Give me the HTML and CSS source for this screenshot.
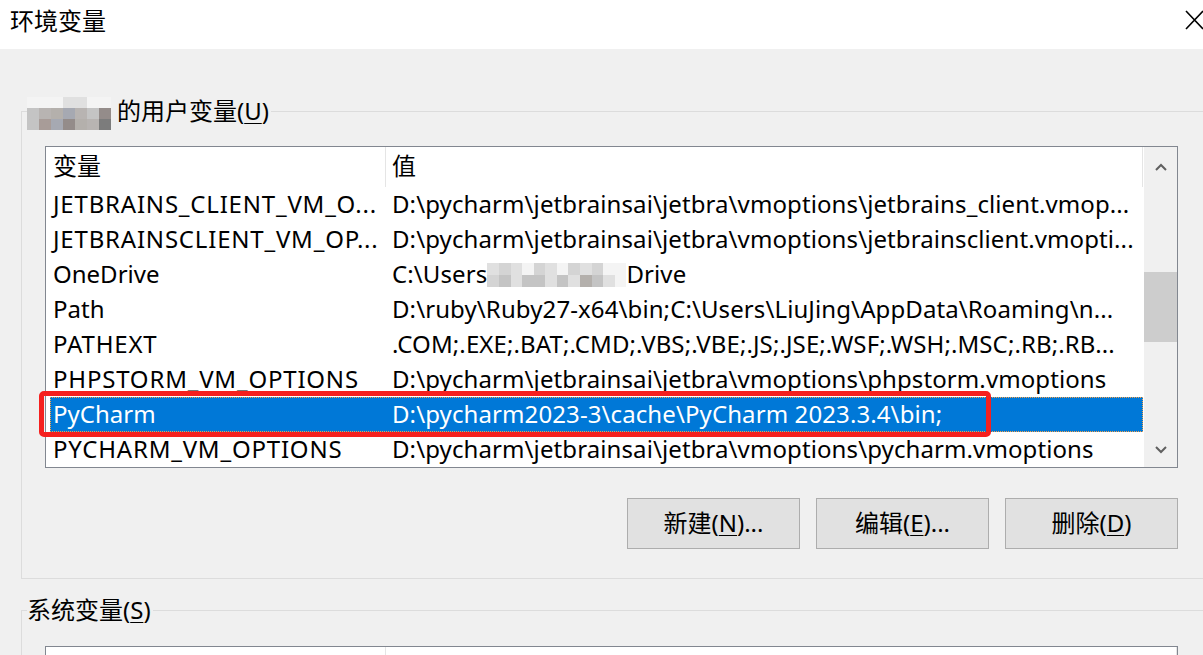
FILE: index.html
```html
<!DOCTYPE html>
<html lang="zh-CN">
<head>
    <meta charset="UTF-8">
    <title>环境变量</title>
    <link rel="stylesheet" href="styles.css">
</head>
<body>
    <div class="titlebar">
        <span class="title">环境变量</span>
        <svg class="close" width="19" height="20" viewBox="0 0 19 20">
            <path d="M1 1L18 19M18 1L1 19" stroke="#000" stroke-width="1.6" fill="none"/>
        </svg>
    </div>

    <div class="content">
        <!-- User variables -->
        <fieldset class="group">
            <legend>
                <span class="mosaic mosaic-name">
                    <i class="c0"></i><i class="c0"></i><i class="c0"></i><i class="c1"></i><i class="c1"></i><i class="c0"></i><i class="c0"></i>
                    <i class="c3"></i><i class="c8"></i><i class="c4"></i><i class="c6"></i><i class="c8"></i><i class="c3"></i><i class="c7"></i>
                    <i class="c3"></i><i class="c5"></i><i class="c6"></i><i class="c7"></i><i class="c4"></i><i class="c8"></i><i class="c9"></i>
                </span>的用户变量(<u>U</u>)
            </legend>
            <div class="group-body">
                <div class="listbox">
                    <div class="list">
                        <div class="list-head">
                            <div class="col-name">变量</div>
                            <div class="col-value">值</div>
                        </div>
                        <div class="row"><div class="col-name caps">JETBRAINS_CLIENT_VM_O...</div><div class="col-value">D:\pycharm\jetbrainsai\jetbra\vmoptions\jetbrains_client.vmop...</div></div>
                        <div class="row"><div class="col-name caps">JETBRAINSCLIENT_VM_OP...</div><div class="col-value">D:\pycharm\jetbrainsai\jetbra\vmoptions\jetbrainsclient.vmopti...</div></div>
                        <div class="row"><div class="col-name">OneDrive</div><div class="col-value">C:\Users<span class="mosaic mosaic-path"><i class="c1"></i><i class="c2"></i><i class="c1"></i><i class="c0"></i><i class="c2"></i><i class="c1"></i><i class="c0"></i><i class="c2"></i><i class="c1"></i><i class="c2"></i><i class="c0"></i><i class="c0"></i><i class="c2"></i><i class="c3"></i><i class="c1"></i><i class="c3"></i><i class="c3"></i><i class="c1"></i><i class="c3"></i><i class="c1"></i><i class="c4"></i><i class="c3"></i><i class="c1"></i><i class="c0"></i></span>Drive</div></div>
                        <div class="row"><div class="col-name">Path</div><div class="col-value">D:\ruby\Ruby27-x64\bin;C:\Users\LiuJing\AppData\Roaming\n...</div></div>
                        <div class="row"><div class="col-name caps">PATHEXT</div><div class="col-value">.COM;.EXE;.BAT;.CMD;.VBS;.VBE;.JS;.JSE;.WSF;.WSH;.MSC;.RB;.RB...</div></div>
                        <div class="row"><div class="col-name caps">PHPSTORM_VM_OPTIONS</div><div class="col-value">D:\pycharm\jetbrainsai\jetbra\vmoptions\phpstorm.vmoptions</div></div>
                        <div class="row selected"><div class="col-name">PyCharm</div><div class="col-value">D:\pycharm2023-3\cache\PyCharm 2023.3.4\bin;</div></div>
                        <div class="row"><div class="col-name caps">PYCHARM_VM_OPTIONS</div><div class="col-value">D:\pycharm\jetbrainsai\jetbra\vmoptions\pycharm.vmoptions</div></div>
                    </div>
                    <div class="scrollbar">
                        <div class="arrow arrow-up">
                            <svg width="12" height="8" viewBox="0 0 12 8"><path d="M1 7L6 2L11 7" stroke="#606060" stroke-width="2" fill="none"/></svg>
                        </div>
                        <div class="track"><div class="thumb"></div></div>
                        <div class="arrow arrow-down">
                            <svg width="12" height="8" viewBox="0 0 12 8"><path d="M1 1L6 6L11 1" stroke="#606060" stroke-width="2" fill="none"/></svg>
                        </div>
                    </div>
                    <div class="annotation"></div>
                </div>
                <div class="buttons">
                    <button>新建(<u>N</u>)...</button>
                    <button>编辑(<u>E</u>)...</button>
                    <button>删除(<u>D</u>)</button>
                </div>
            </div>
        </fieldset>

        <!-- System variables (only the top edge is in view) -->
        <fieldset class="group group-system">
            <legend>系统变量(<u>S</u>)</legend>
            <div class="group-body">
                <div class="listbox listbox-system">
                    <div class="list">
                        <div class="list-head">
                            <div class="col-name"></div>
                            <div class="col-value"></div>
                        </div>
                    </div>
                </div>
            </div>
        </fieldset>
    </div>
</body>
</html>
```

FILE: styles.css
```css
/* Global */
body {
    margin: 0;
    width: 1203px;
    height: 655px;
    overflow: hidden;
    background: #f0f0f0;
    font-family: 'Noto Sans', 'Noto Sans CJK SC', sans-serif;
    font-size: 24px;
    color: #000;
}

u {
    text-decoration-thickness: 1px;
    text-underline-offset: 3px;
}

/* Title bar */
.titlebar {
    height: 49px;
    background: #fff;
    display: flex;
    justify-content: space-between;
    align-items: flex-start;
    padding-left: 10px;
}

.title {
    line-height: 42px;
}

.close {
    margin-top: 10px;
    margin-right: -1px;
}

/* Group boxes */
.content {
    padding-left: 21px;
}

.group {
    margin: 47px 0 0 0;
    padding: 0 0 29px 0;
    width: 1219px;
    border: 1px solid #dcdcdc;
    min-width: 0;
}

.group legend {
    margin-left: 5px;
    padding: 0 2px 0 0;
    line-height: 30px;
}

.group-body {
    width: 1133px;
    margin: 20px 0 0 23px;
}

.group-system {
    margin-top: 16px;
    padding-bottom: 0;
    border-bottom: none;
}

.group-system .group-body {
    margin-top: 21px;
}

/* List view */
.listbox {
    position: relative;
    height: 320px;
    display: flex;
    background: #fff;
    border: 1px solid #828790;
}

.listbox-system {
    height: 8px;
    border-bottom: none;
}

.list {
    flex: 1;
    overflow: hidden;
}

.list-head {
    display: flex;
    height: 40px;
    line-height: 38px;
    border-right: 1px solid #e5e5e5;
}

.list-head .col-name {
    width: 332px;
    padding-left: 7px;
    border-right: 1px solid #e5e5e5;
}

.list-head .col-value {
    padding-left: 6px;
}

.row {
    display: flex;
    height: 35px;
    line-height: 33px;
    margin-left: 4px;
    white-space: nowrap;
}

.row .col-name {
    width: 332px;
    padding-left: 3px;
    overflow: hidden;
}

.row .col-name.caps {
    letter-spacing: 0.8px;
}

.row .col-value {
    padding-left: 7px;
    overflow: hidden;
    letter-spacing: 0.1px;
}

.row.selected {
    background: #0078d7;
    color: #fff;
    outline: 1px dotted #f7a24a;
    outline-offset: -1px;
}

/* Scroll bar */
.scrollbar {
    width: 33px;
    margin-left: 1px;
    display: flex;
    flex-direction: column;
    background: #f0f0f0;
}

.arrow {
    display: flex;
    justify-content: center;
    align-items: center;
}

.arrow-up {
    height: 40px;
}

.arrow-down {
    height: 35px;
}

.track {
    flex: 1;
}

.thumb {
    margin-top: 85px;
    height: 70px;
    background: #cdcdcd;
}

/* Red highlight drawn over the selected row */
.annotation {
    position: absolute;
    left: -7px;
    top: 244px;
    width: 942px;
    height: 36px;
    border: 5px solid #f5201e;
    border-radius: 5px;
}

/* Mosaic (blurred text) */
.mosaic {
    display: inline-grid;
    vertical-align: middle;
}

.mosaic i {
    display: block;
}

.mosaic-name {
    grid-template-columns: repeat(7, 12px);
    grid-auto-rows: 11px;
    margin: -6px 6px -6px 0;
}

.mosaic-path {
    grid-template-columns: repeat(12, 11.6px);
    grid-auto-rows: 12px;
    margin: -6px 0 -2px 0;
}

.c0 { background: #f4f4f4; }
.c1 { background: #e0e0e0; }
.c2 { background: #d4d4d4; }
.c3 { background: #c4c4c4; }
.c4 { background: #b4b0ac; }
.c5 { background: #a89c98; }
.c6 { background: #a6a9b2; }
.c7 { background: #948c8a; }
.c8 { background: #b8b4b2; }
.c9 { background: #7c7c7c; }

/* Buttons */
.buttons {
    display: flex;
    justify-content: flex-end;
    gap: 16px;
    margin-top: 30px;
}

button {
    width: 173px;
    height: 51px;
    background: #e1e1e1;
    border: 1px solid #adadad;
    font-family: inherit;
    font-size: 24px;
    line-height: 30px;
    color: #000;
    padding: 0 0 2px 0;
}
```
